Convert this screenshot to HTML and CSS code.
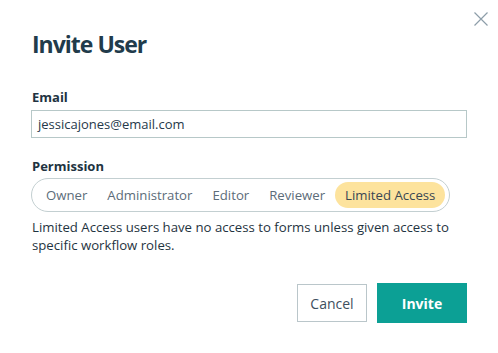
FILE: index.html
```html
<!DOCTYPE html>
<html lang="en">
<head>
<meta charset="utf-8">
<title>Invite User</title>
<link rel="stylesheet" href="styles.css">
</head>
<body>
<div class="dialog">
  <button class="close" aria-label="Close">
    <svg width="14" height="14" viewBox="0 0 14 14"><path d="M0.5 0.5 L13.5 13.5 M13.5 0.5 L0.5 13.5" stroke="#8d9ea9" stroke-width="1.2" fill="none"/></svg>
  </button>
  <h1 class="title">Invite User</h1>
  <div class="field">
    <label class="label">Email</label>
    <div class="input">jessicajones@email.com</div>
  </div>
  <div class="field field-perm">
    <label class="label">Permission</label>
    <div class="segmented">
      <span class="seg">Owner</span>
      <span class="seg">Administrator</span>
      <span class="seg">Editor</span>
      <span class="seg">Reviewer</span>
      <span class="seg active">Limited Access</span>
    </div>
  </div>
  <p class="help">Limited Access users have no access to forms unless given access to specific workflow roles.</p>
  <div class="actions">
    <button class="btn cancel">Cancel</button>
    <button class="btn primary">Invite</button>
  </div>
</div>
</body>
</html>
```

FILE: styles.css
```css
* { box-sizing: border-box; }
html, body { margin: 0; padding: 0; background: #ffffff; }
body {
  font-family: "Open Sans", "Noto Sans", sans-serif;
  font-size: 13px;
  color: #1f3441;
}
.dialog {
  position: relative;
  width: 498px;
  height: 353px;
  padding: 29px 31px 0 31px;
}
.close {
  position: absolute;
  top: 12px;
  left: 474px;
  width: 14px;
  height: 14px;
  padding: 0;
  border: 0;
  background: none;
  display: block;
}
.close svg { display: block; }
.title {
  margin: 0 0 0 1px;
  font-size: 23px;
  line-height: 30px;
  font-weight: 700;
  letter-spacing: -1px;
  color: #213b4b;
}
.field { display: flex; flex-direction: column; align-items: flex-start; margin-top: 29px; }
.field-perm { margin-top: 19px; }
.label {
  display: block;
  font-weight: 700;
  font-size: 13px;
  line-height: 18px;
  color: #213341;
  margin: 0 0 4px 1px;
}
.field-perm .label { margin-bottom: 3px; }
.input {
  width: 100%;
  height: 28px;
  border: 1px solid #b7c8c8;
  padding: 0 6px;
  line-height: 26px;
  color: #26394a;
}
.segmented {
  display: inline-flex;
  align-items: center;
  height: 34px;
  padding: 3px 4px;
  border: 1px solid #c3cfd1;
  border-radius: 17px;
}
.seg {
  padding: 0 10px;
  height: 26px;
  line-height: 26px;
  font-size: 13.2px;
  color: #5c6c79;
  border-radius: 13px;
  white-space: nowrap;
}
.seg.active {
  background: #fde39d;
  color: #3a4753;
}
.help {
  margin: 6px 0 0 1px;
  font-size: 13.2px;
  line-height: 18px;
  color: #1f3441;
}
.actions {
  display: flex;
  justify-content: flex-end;
  align-items: center;
  gap: 10px;
  margin-top: 29px;
}
.btn {
  font-family: inherit;
  font-size: 14px;
  cursor: pointer;
}
.cancel {
  width: 70px;
  height: 38px;
  border: 1px solid #bac6ca;
  background: #fff;
  color: #3d4f5e;
}
.primary {
  width: 90px;
  height: 40px;
  border: 0;
  background: #0ca095;
  color: #ffffff;
  font-weight: 700;
}
```
